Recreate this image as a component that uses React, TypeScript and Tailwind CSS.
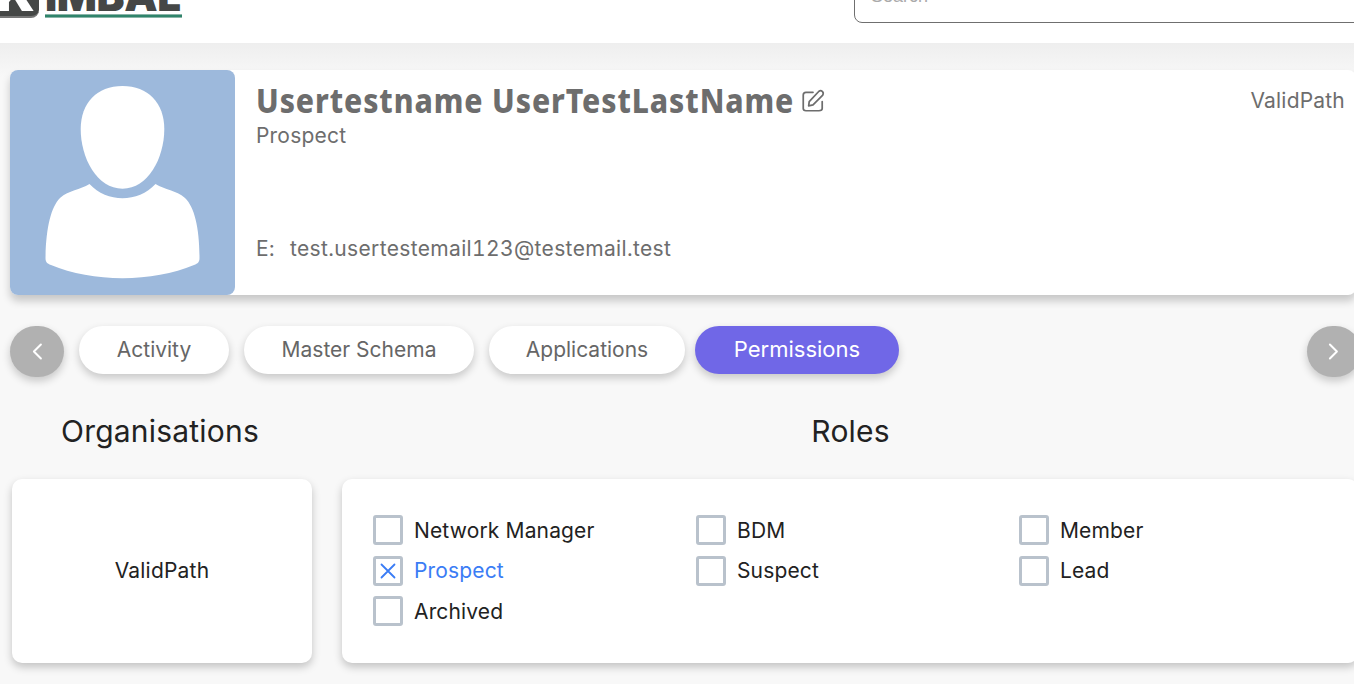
import type { ReactNode } from "react";

const ORGS = ["ValidPath"];

const TABS = [
  { label: "Activity", cls: "w-[150px] bg-white text-[#666] leading-[48px]" },
  { label: "Master Schema", cls: "ml-[15px] w-[230px] bg-white text-[#666] leading-[48px]" },
  { label: "Applications", cls: "ml-[15px] w-[196px] bg-white text-[#666] leading-[48px]" },
  { label: "Permissions", cls: "ml-[10px] w-[204px] bg-[#7067e7] text-white text-[22px] leading-[46px] pb-[2px]" },
];

const ROLES = [
  { label: "Network Manager", checked: false },
  { label: "BDM", checked: false },
  { label: "Member", checked: false },
  { label: "Prospect", checked: true },
  { label: "Suspect", checked: false },
  { label: "Lead", checked: false },
  { label: "Archived", checked: false },
];

function Logo() {
  return (
    <div className="flex h-[19px] items-end">
      <div className="mb-px flex h-[60px] w-[39px] items-end justify-end overflow-hidden rounded-br-[8px] border-b-[2px] border-[#777] bg-[#454746]">
        <span className="mr-[4px] -mb-[2px] font-['Inter'] text-[50px] leading-[50px] font-black text-white">K</span>
      </div>
      <div className="ml-[6px] flex w-[137px] flex-col">
        <span className="-mb-[7px] font-['Inter'] text-[42px] leading-[50px] font-black tracking-[-0.4px] text-[#454746]">IMBAL</span>
        <span className="mb-px h-[4px] border-y border-[#8ab5a8] bg-[#2f846b]" />
      </div>
    </div>
  );
}

function Avatar() {
  return (
    <svg viewBox="0 0 225 225" className="size-[225px] shrink-0 rounded-[8px] bg-[#9db9dc]">
      <path
        fill="#fff"
        d="M112.500 16C138 16 154.300 33 154.300 59C154.300 88 138 118.700 112.500 118.700C87 118.700 70.700 88 70.700 59C70.700 33 87 16 112.500 16Z"
      />
      <path
        fill="#fff"
        d="M79.500 114C97 133 128 133 145.500 114C155 120 166 120 175 128C184.500 137 189.500 158 189.500 188C189.500 192 188 193.500 184 195C143 212.500 82 212.500 41 195C37 193.500 35.500 192 35.500 188C36 158 41 137 50 128C59 120 70 120 79.500 114Z"
      />
    </svg>
  );
}

function Icon({ className, width, children }: { className: string; width: number; children: ReactNode }) {
  return (
    <svg viewBox="0 0 24 24" fill="none" stroke="currentColor" strokeWidth={width} strokeLinecap="round" strokeLinejoin="round" className={className}>
      {children}
    </svg>
  );
}

function ArrowButton({ direction }: { direction: "left" | "right" }) {
  return (
    <button className="flex h-[51px] w-[54px] shrink-0 items-center justify-center rounded-[26px] bg-[#b1b1b1] text-white shadow-[0_4px_8px_rgba(0,0,0,0.2)]">
      <Icon className="size-6" width={2}>
        <path d={direction === "left" ? "M15.900 4.500L8.900 11.500L15.900 18.500" : "M7.900 4.500L14.900 11.500L7.900 18.500"} />
      </Icon>
    </button>
  );
}

export default function App() {
  return (
    <div className="h-[684px] w-[1354px] overflow-hidden bg-[#f8f8f8] font-['Inter',sans-serif] text-[21px] tracking-[0.2px] text-[#222]">
      <header className="flex h-[43px] items-start justify-between overflow-hidden bg-white">
        <Logo />
        <div className="flex h-[23px] w-[500px] items-end">
          <div className="flex h-[60px] w-[520px] shrink-0 items-end rounded-[8px] border border-[#6f6f6f] pb-[14px] pl-[16px]">
            <span className="font-['Liberation_Sans',sans-serif] text-[18px] leading-[24px] tracking-[0px] text-[#aaa]">Search</span>
          </div>
        </div>
      </header>

      <main className="h-[641px] bg-[linear-gradient(#eeeeee,#f8f8f8_34px)] pt-[27px] pl-[10px]">
        <section className="flex h-[225px] w-[1346px] rounded-[8px] bg-white shadow-[0_6px_9px_rgba(0,0,0,0.2)]">
          <Avatar />
          <div className="flex flex-1 flex-col pt-[11px] pl-[21px] text-[#6d6d6d]">
            <div className="flex h-[40px] items-center">
              <h1 className="w-[540px] origin-left scale-x-[0.911] font-['Noto_Sans',sans-serif] text-[33px] leading-[40px] font-extrabold tracking-[1px] whitespace-nowrap">
                Usertestname UserTestLastName
              </h1>
              <Icon className="ml-[4px] size-[26px]" width={1.6}>
                <path d="M12 4H5.500C4 4 3 5 3 6.500V19C3 20.400 4 21 5.500 21H17.500C19 21 20.500 20.400 20.500 19V12.500M8.500 12.500L17.500 3C19.500 1.500 22.500 3.500 21 6.500L12 15.500L8 16.500Z" />
              </Icon>
            </div>
            <p className="leading-[30px]">Prospect</p>
            <p className="mt-[83px] flex leading-[30px]">
              <span className="w-[34px]">E:</span>
              <span className="tracking-[0.35px] tabular-nums">test.usertestemail123@testemail.test</span>
            </p>
          </div>
          <p className="pt-[16px] pr-[11px] leading-[30px] text-[#6d6d6d]">ValidPath</p>
        </section>

        <nav className="mt-[31px] flex h-[51px] items-start">
          <ArrowButton direction="left" />
          <div className="ml-[15px] flex w-[1228px] shrink-0">
            {TABS.map((tab) => (
              <button key={tab.label} className={`h-[48px] shrink-0 rounded-full text-center tracking-[0px] shadow-[0_4px_8px_rgba(0,0,0,0.2)] ${tab.cls}`}>
                {tab.label}
              </button>
            ))}
          </div>
          <ArrowButton direction="right" />
        </nav>

        <div className="mt-[30px] ml-[2px] flex h-[48px] text-[30px] leading-[48px]">
          <h2 className="w-[297px] text-center">Organisations</h2>
          <h2 className="ml-[33px] w-[1016px] pl-[6px] text-center">Roles</h2>
        </div>

        <div className="mt-[24px] ml-[2px] flex">
          {ORGS.map((org) => (
            <div key={org} className="flex h-[184px] w-[300px] shrink-0 items-center justify-center rounded-[10px] bg-white shadow-[0_4px_9px_rgba(0,0,0,0.22)]">
              {org}
            </div>
          ))}
          <div className="ml-[30px] h-[184px] w-[1016px] shrink-0 rounded-[10px] bg-white pt-[31px] pl-[31px] shadow-[0_4px_9px_rgba(0,0,0,0.22)]">
            <ul className="grid auto-rows-[40.5px] grid-cols-[323px_323px_323px] tracking-[0.15px]">
              {ROLES.map((role) => (
                <li key={role.label} className={role.checked ? "flex items-center text-[#3a7cf5]" : "flex items-center"}>
                  <span className="mr-[11px] flex size-[30px] items-center justify-center rounded-[3px] border-[3px] border-[#b9c2cc]">
                    {role.checked && (
                      <Icon className="size-[24px] shrink-0" width={1.8}>
                        <path d="M5.500 5.500L18.500 18.500M18.500 5.500L5.500 18.500" />
                      </Icon>
                    )}
                  </span>
                  {role.label}
                </li>
              ))}
            </ul>
          </div>
        </div>
      </main>
    </div>
  );
}
